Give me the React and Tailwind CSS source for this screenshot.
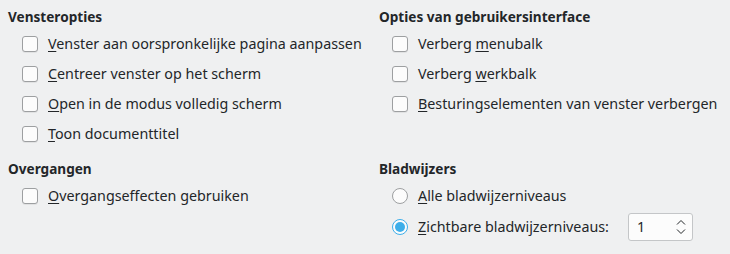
const Check = ({ children }) => (
  <label className="flex h-[30px] items-center">
    <span className="h-4 w-4 rounded-[3px] border border-[#9d9fa1] bg-[#fcfcfc] shadow-[0_1px_0_rgba(0,0,0,0.06)]" />
    <span className="ml-[10px]">{children}</span>
  </label>
)

const Radio = ({ checked, children }) => (
  <span className="flex items-center">
    {checked ? (
      <span className="flex h-4 w-4 items-center justify-center rounded-full border border-[#3daee9] bg-[#fcfcfc]">
        <span className="h-[10px] w-[10px] rounded-full bg-[#3daee9]" />
      </span>
    ) : (
      <span className="h-4 w-4 rounded-full border border-[#9d9fa1] bg-[#fcfcfc]" />
    )}
    <span className="ml-[10px]">{children}</span>
  </span>
)

const U = ({ children }) => <span className="underline underline-offset-2">{children}</span>

const Heading = ({ children }) => (
  <div className="flex h-5 items-center text-[13.6px] font-bold">{children}</div>
)

export default function App() {
  return (
    <div
      className="h-[254px] w-[730px] bg-[#eff0f1] pl-2 pt-[7px] text-[14.3px] leading-5 text-[#232629]"
      style={{ fontFamily: '"Noto Sans", sans-serif' }}
    >
      <div className="flex">
        <div className="w-[371px]">
          <Heading>Vensteropties</Heading>
          <div className="mt-[2px] pl-[14px]">
            <Check><U>V</U>enster aan oorspronkelijke pagina aanpassen</Check>
            <Check><U>C</U>entreer venster op het scherm</Check>
            <Check><U>O</U>pen in de modus volledig scherm</Check>
            <Check><U>T</U>oon documenttitel</Check>
          </div>
        </div>
        <div>
          <Heading>Opties van gebruikersinterface</Heading>
          <div className="mt-[2px] pl-[13px]">
            <Check>Verberg <U>m</U>enubalk</Check>
            <Check>Verberg <U>w</U>erkbalk</Check>
            <Check><U>B</U>esturingselementen van venster verbergen</Check>
          </div>
        </div>
      </div>
      <div className="mt-[10px] flex">
        <div className="w-[371px]">
          <Heading>Overgangen</Heading>
          <div className="mt-[2px] pl-[14px]">
            <Check><U>O</U>vergangseffecten gebruiken</Check>
          </div>
        </div>
        <div>
          <Heading>Bladwijzers</Heading>
          <div className="mt-[2px] pl-[13px]">
            <div className="flex h-[30px] items-center">
              <Radio><U>A</U>lle bladwijzerniveaus</Radio>
            </div>
            <div className="flex h-[32px] items-center">
              <Radio checked><U>Z</U>ichtbare bladwijzerniveaus:</Radio>
              <div className="ml-[19px] flex h-[28px] w-[65px] items-center justify-between rounded-[3px] border border-[#c4c6c8] bg-[#fcfcfc] pl-2 pr-[6px]">
                <span>1</span>
                <svg width="10" height="18" viewBox="0 0 10 18" fill="none" stroke="#232629" strokeWidth="1">
                  <path d="M1 6.5 L5 2.5 L9 6.5" />
                  <path d="M1 11.5 L5 15.5 L9 11.5" />
                </svg>
              </div>
            </div>
          </div>
        </div>
      </div>
    </div>
  )
}
